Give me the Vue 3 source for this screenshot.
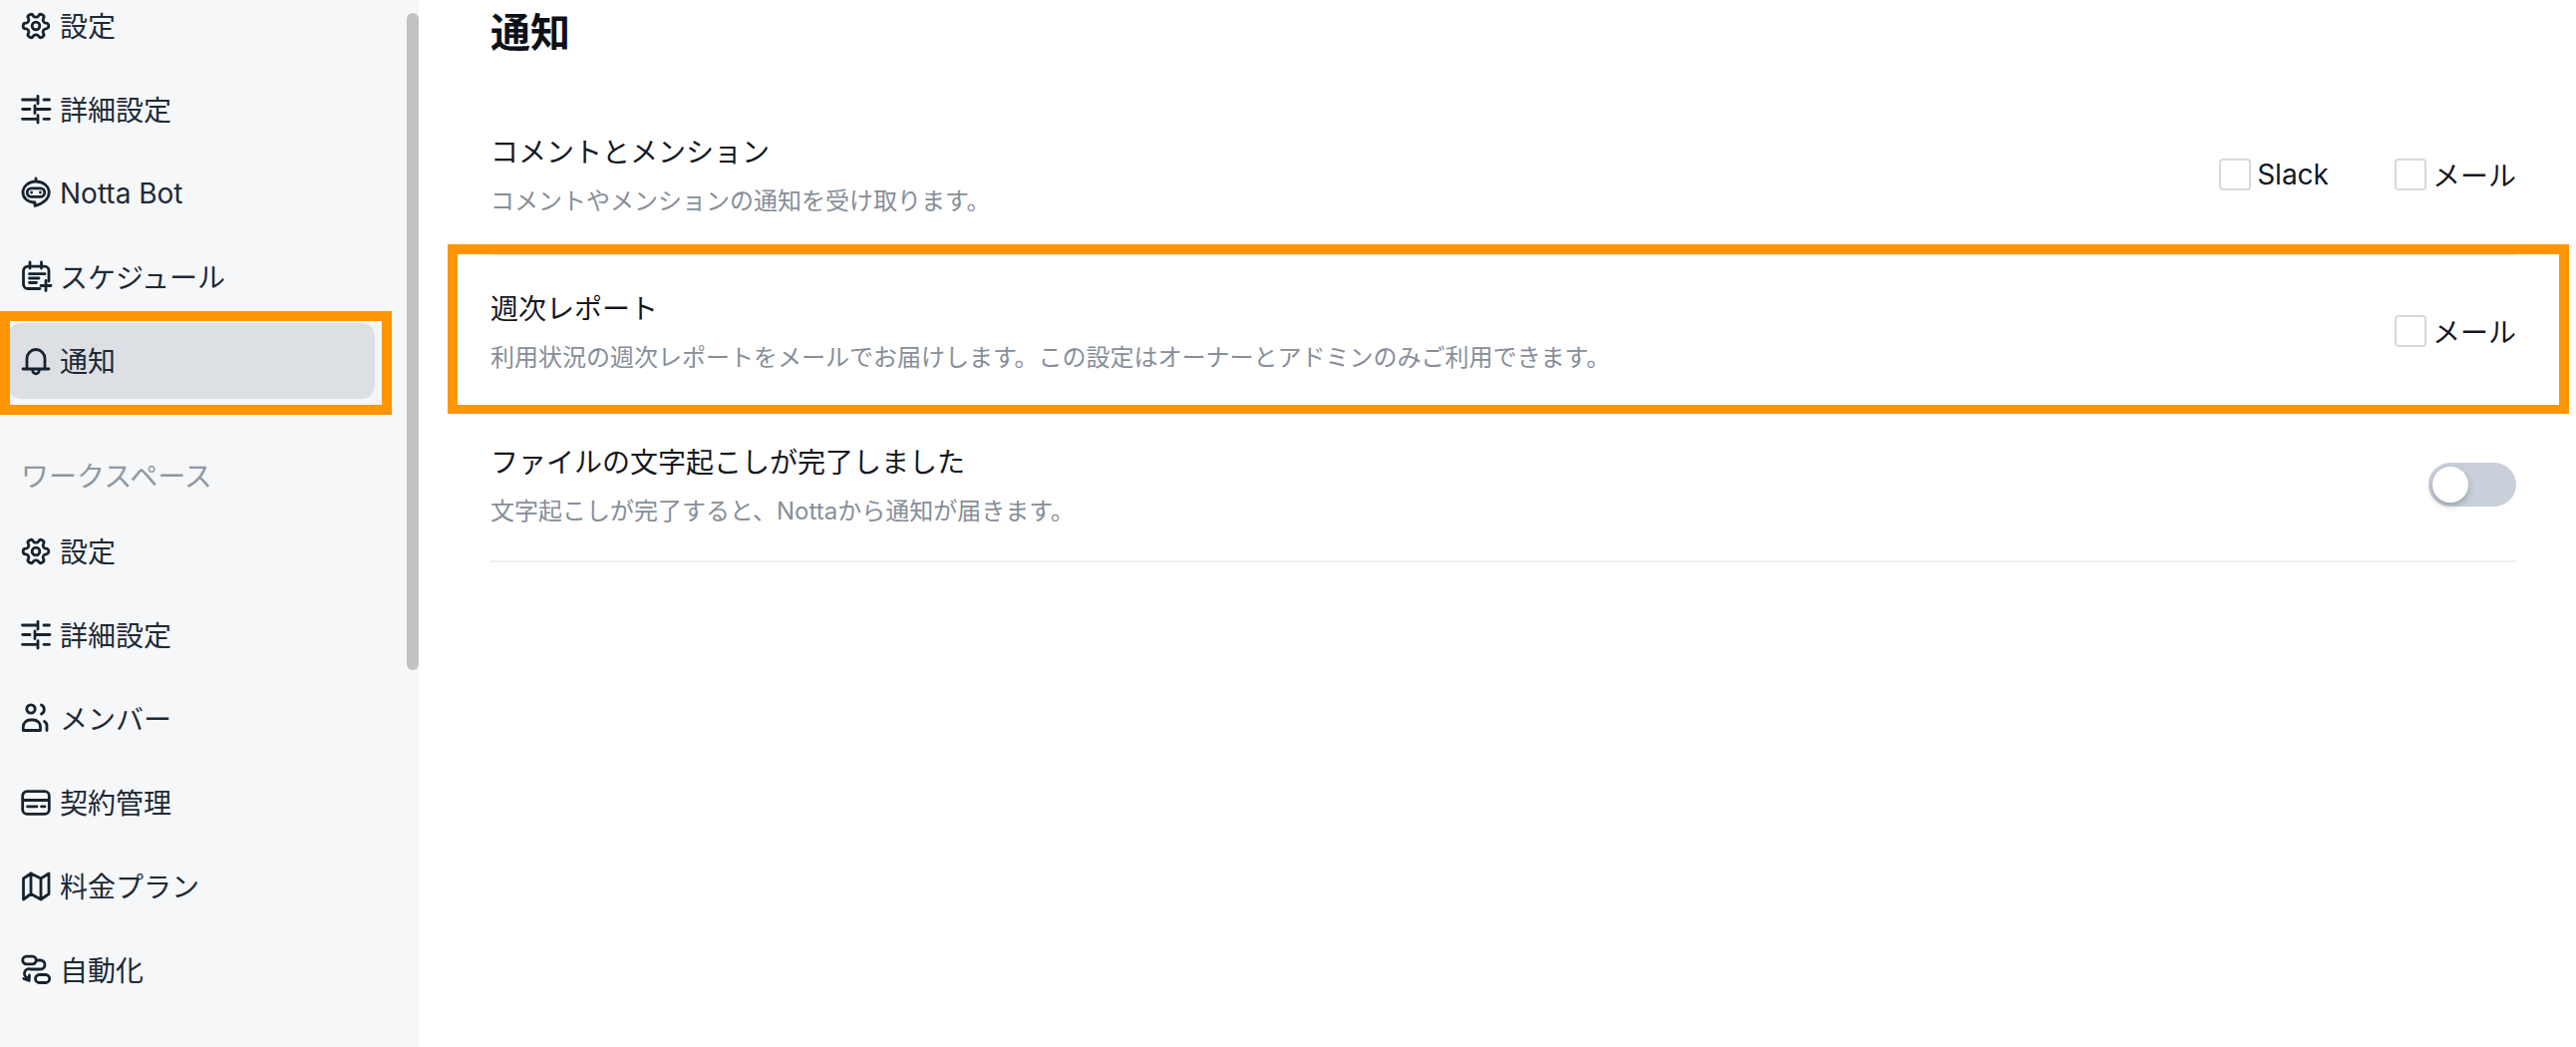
<script setup>
const gear = 'M12.22 2h-.44a2 2 0 0 0-2 2v.18a2 2 0 0 1-1 1.73l-.43.25a2 2 0 0 1-2 0l-.15-.08a2 2 0 0 0-2.73.73l-.22.38a2 2 0 0 0 .73 2.73l.15.1a2 2 0 0 1 1 1.72v.51a2 2 0 0 1-1 1.74l-.15.09a2 2 0 0 0-.73 2.73l.22.38a2 2 0 0 0 2.73.73l.15-.08a2 2 0 0 1 2 0l.43.25a2 2 0 0 1 1 1.73V20a2 2 0 0 0 2 2h.44a2 2 0 0 0 2-2v-.18a2 2 0 0 1 1-1.73l.43-.25a2 2 0 0 1 2 0l.15.08a2 2 0 0 0 2.73-.73l.22-.39a2 2 0 0 0-.73-2.73l-.15-.08a2 2 0 0 1-1-1.74v-.5a2 2 0 0 1 1-1.74l.15-.09a2 2 0 0 0 .73-2.73l-.22-.38a2 2 0 0 0-2.73-.73l-.15.08a2 2 0 0 1-2 0l-.43-.25a2 2 0 0 1-1-1.73V4a2 2 0 0 0-2-2zM15 12a3 3 0 1 1-6 0a3 3 0 1 1 6 0z'
const gearT = 'translate(20 20) rotate(90) scale(1.28) translate(-12 -12)'
const sliders = 'M6.5 10H21M28 10H33.5M22 6.5V14M6.7 19.5H14M20 19.5H34M19 16V23.5M6.5 29.3H21M28 29.3H33.5M22 25.7V33'
const icons = {
  gear: { d: gear, t: gearT },
  sliders: { d: sliders },
  bot: { d: 'M20 8C12.5 8 7 13 7 19C7 25 12 29 19 29V32.5C26 30.5 33.2 26 33.2 19C33.2 13 27.5 8 20 8ZM20 5V8M15.5 14.8H24.5A4.3 4.3 0 0 1 24.5 23.4H15.5A4.3 4.3 0 0 1 15.5 14.8Z', f: 'M14.2 19a1.4 1.4 0 1 0 2.8 0a1.4 1.4 0 1 0-2.8 0zM23 19a1.4 1.4 0 1 0 2.8 0a1.4 1.4 0 1 0-2.8 0z' },
  calendar: { d: 'M33 24V13.5A4.3 4.3 0 0 0 28.7 9.2H12A4.5 4.5 0 0 0 7.5 13.7V27A4.5 4.5 0 0 0 12 31.5H24M14 5V11M25.500 5V11M13.500 16.700H29M13.500 21H23M13.500 25.500H20.500M30 23.500V33.500M25 28.500H35' },
  bell: { d: 'M7 28H33M11 28V17.500A9 9 0 0 1 29 17.500V28M16.700 29.500A3.300 3.300 0 0 0 23.300 29.500' },
  members: { d: 'M19.200 10A4.200 4.200 0 1 1 10.800 10A4.200 4.200 0 1 1 19.200 10ZM7.300 31.500V28A7 7 0 0 1 14.300 21H17.500A7 7 0 0 1 24.500 28V31.500ZM25.500 6A5 5 0 0 1 25.500 15M31 31.500V27.500A5 5 0 0 0 28.500 22.500' },
  card: { d: 'M11 8.700H29A4.300 4.300 0 0 1 33.300 13V27A4.300 4.300 0 0 1 29 31.300H11A4.300 4.300 0 0 1 6.700 27V13A4.300 4.300 0 0 1 11 8.700ZM6.700 17.500H33.300M11.500 23.800H21M25.500 23.800H29' },
  map: { d: 'M7.500 12L15 7L25 12L33 7V27.500L25 33L15 27.500L7.500 33ZM15 7V27.500M25 12V33' },
  route: { d: 'M10.500 6.200H16.500A3.800 3.800 0 0 1 16.500 13.800H10.500A3.800 3.800 0 0 1 10.500 6.200ZM23.500 24.500H29.700A4 4 0 0 1 29.700 32.500H23.500A4 4 0 0 1 23.500 24.500ZM20.500 10H24.500A4.500 4.500 0 0 1 24.500 19H14.500A4.500 4.500 0 0 0 11.500 27.500L13 29.500M7.800 28.500L13.200 30.500L13.500 25' }
}
const personal = [
  { label: '設定', icon: 'gear' },
  { label: '詳細設定', icon: 'sliders' },
  { label: 'Notta Bot', icon: 'bot', latin: true },
  { label: 'スケジュール', icon: 'calendar' },
  { label: '通知', icon: 'bell', active: true }
]
const workspace = [
  { label: '設定', icon: 'gear' },
  { label: '詳細設定', icon: 'sliders' },
  { label: 'メンバー', icon: 'members' },
  { label: '契約管理', icon: 'card' },
  { label: '料金プラン', icon: 'map' },
  { label: '自動化', icon: 'route' }
]
const groups = [
  { items: personal },
  { title: 'ワークスペース', items: workspace }
]
const rows = [
  { title: 'コメントとメンション', desc: 'コメントやメンションの通知を受け取ります。', options: ['Slack', 'メール'] },
  { title: '週次レポート', desc: '利用状況の週次レポートをメールでお届けします。この設定はオーナーとアドミンのみご利用できます。', options: ['メール'] },
  { title: 'ファイルの文字起こしが完了しました', desc: '文字起こしが完了すると、Nottaから通知が届きます。', toggle: true }
]
</script>

<template>
  <div class="page">
    <aside class="sidebar">
      <nav v-for="(group, g) in groups" :key="g" class="group">
        <div v-if="group.title" class="group-title">{{ group.title }}</div>
        <a v-for="item in group.items" :key="item.label" class="item" :class="{ active: item.active }">
          <svg class="icon" viewBox="0 0 40 40" width="40" height="40">
            <path :d="icons[item.icon].d" :transform="icons[item.icon].t" class="stroke" />
            <path v-if="icons[item.icon].f" :d="icons[item.icon].f" class="solid" />
          </svg>
          <span class="label" :class="{ latin: item.latin }">{{ item.label }}</span>
        </a>
      </nav>
      <div class="scrollbar"></div>
    </aside>
    <main class="main">
      <h1 class="heading">通知</h1>
      <section class="rows">
        <div v-for="row in rows" :key="row.title" class="row">
          <div class="copy">
            <div class="title">{{ row.title }}</div>
            <div class="desc">{{ row.desc }}</div>
          </div>
          <div v-if="row.options" class="options">
            <label v-for="opt in row.options" :key="opt" class="option">
              <span class="box"></span>
              <span>{{ opt }}</span>
            </label>
          </div>
          <div v-if="row.toggle" class="toggle"><span class="knob"></span></div>
        </div>
      </section>
    </main>
    <div class="mark mark-nav"></div>
    <div class="mark mark-row"></div>
  </div>
</template>

<style>
html, body { margin: 0; background: #fff; }
</style>

<style scoped>
.page {
  position: relative;
  display: flex;
  height: 1050px;
  overflow: hidden;
  font-family: Inter, "Noto Sans CJK JP", sans-serif;
  color: #14181f;
}
.sidebar {
  position: relative;
  flex: none;
  width: 420px;
  overflow: hidden;
  background: #f5f7f9;
  padding-left: 8px;
  box-sizing: border-box;
}
.group {
  display: flex;
  flex-direction: column;
  gap: 8px;
  width: 368px;
}
.group:first-child { margin-top: -12px; }
.group-title {
  margin: 58px 0 9px 13px;
  height: 40px;
  line-height: 40px;
  font-size: 28px;
  color: #8f98a3;
}
.item {
  display: flex;
  align-items: center;
  gap: 4px;
  height: 76px;
  padding-left: 8px;
  border-radius: 13px;
  font-size: 28px;
  color: #1e2a36;
}
.item.active { background: #dcdfe4; }
.label { padding-bottom: 2px; }
.label.latin { padding-bottom: 0; }
.icon { flex: none; }
.stroke {
  fill: none;
  stroke: #16232f;
  stroke-width: 2.8;
  stroke-linecap: round;
  stroke-linejoin: round;
  vector-effect: non-scaling-stroke;
}
.solid { fill: #16232f; }
.scrollbar {
  position: absolute;
  top: 13px;
  right: 0;
  width: 12px;
  height: 659px;
  border-radius: 6px;
  background: #c1c2c4;
}
.main {
  flex: 1;
  min-width: 0;
  padding: 0 60px 0 72px;
}
.heading {
  margin: 0;
  height: 96px;
  line-height: 66px;
  font-size: 40px;
  font-weight: 700;
  color: #0d1117;
}
.row {
  display: flex;
  align-items: center;
  justify-content: space-between;
  height: 154px;
  box-sizing: border-box;
  border-bottom: 2px solid #eeeeee;
}
.row:first-child { height: 160px; }
.copy {
  display: flex;
  flex-direction: column;
  gap: 10px;
  padding-top: 4px;
}
.title {
  line-height: 40px;
  font-size: 28px;
}
.desc {
  line-height: 38px;
  font-size: 24px;
  color: #868e99;
}
.options {
  display: flex;
  gap: 66px;
  font-size: 28px;
}
.option {
  display: flex;
  align-items: center;
  gap: 6px;
}
.box {
  width: 32px;
  height: 32px;
  box-sizing: border-box;
  border: 2px solid #d9d9d9;
  border-radius: 4px;
  background: #fff;
}
.toggle {
  display: flex;
  align-items: center;
  width: 88px;
  height: 44px;
  padding-left: 4px;
  box-sizing: border-box;
  border-radius: 22px;
  background: #c9d0d9;
}
.knob {
  width: 36px;
  height: 36px;
  border-radius: 50%;
  background: #fff;
  box-shadow: 0 3px 6px rgba(60, 70, 85, 0.35);
}
.mark {
  position: absolute;
  box-sizing: border-box;
  border: 10px solid #ff9500;
  pointer-events: none;
}
.mark-nav {
  left: 0;
  top: 312px;
  width: 393px;
  height: 104px;
}
.mark-row {
  left: 449px;
  top: 245px;
  width: 2128px;
  height: 170px;
  border-width: 10px 10px 9px;
}
</style>
